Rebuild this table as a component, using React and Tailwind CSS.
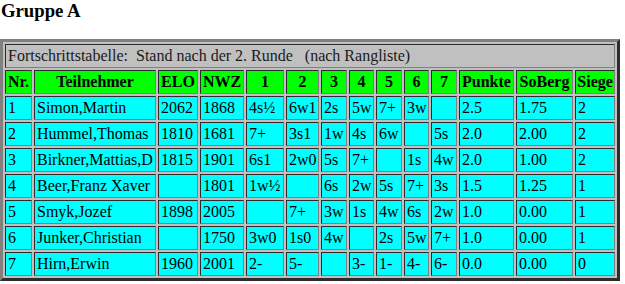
const widths = [
  'w-[27px]', 'w-[122px]', 'w-[40px]', 'w-[44px]', 'w-[38px]', 'w-[33px]', 'w-[26px]',
  'w-[25px]', 'w-[26px]', 'w-[25px]', 'w-[26px]', 'w-[55px]', 'w-[57px]', 'w-[40px]',
];

const head = ['Nr.', 'Teilnehmer', 'ELO', 'NWZ', '1', '2', '3', '4', '5', '6', '7', 'Punkte', 'SoBerg', 'Siege'];

const rows = [
  ['1', 'Simon,Martin', '2062', '1868', '4s½', '6w1', '2s', '5w', '7+', '3w', '', '2.5', '1.75', '2'],
  ['2', 'Hummel,Thomas', '1810', '1681', '7+', '3s1', '1w', '4s', '6w', '', '5s', '2.0', '2.00', '2'],
  ['3', 'Birkner,Mattias,D', '1815', '1901', '6s1', '2w0', '5s', '7+', '', '1s', '4w', '2.0', '1.00', '2'],
  ['4', 'Beer,Franz Xaver', '', '1801', '1w½', '', '6s', '2w', '5s', '7+', '3s', '1.5', '1.25', '1'],
  ['5', 'Smyk,Jozef', '1898', '2005', '', '7+', '3w', '1s', '4w', '6s', '2w', '1.0', '0.00', '1'],
  ['6', 'Junker,Christian', '', '1750', '3w0', '1s0', '4w', '', '2s', '5w', '7+', '1.0', '0.00', '1'],
  ['7', 'Hirn,Erwin', '1960', '2001', '2-', '5-', '', '3-', '1-', '4-', '6-', '0.0', '0.00', '0'],
];

// inset cell border, like an old border="3" table
const cell =
  'h-[24px] p-0 align-middle whitespace-nowrap border border-t-[#2c2c2c] border-l-[#2c2c2c] border-b-[#808080] border-r-[#808080]';

export default function App() {
  return (
    <div className="w-[625px] h-[284px] bg-white text-black font-['Liberation_Serif',serif] text-[16px] leading-[18px] overflow-hidden">
      <div className="h-[39px] pl-[1px]">
        <h3 className="text-[18.72px] leading-[21px] font-bold">Gruppe A</h3>
      </div>

      <table className="table-fixed w-[620px] border-separate border-spacing-[2px] bg-[#c0c0c0] border-[3px] border-t-[#808080] border-l-[#808080] border-b-[#2c2c2c] border-r-[#2c2c2c]">
        <colgroup>
          {widths.map((w, i) => (
            <col key={i} className={w} />
          ))}
        </colgroup>
        <tbody>
          <tr>
            <td colSpan={14} className={`${cell} px-[2px] bg-[#c0c0c0] text-[#1a1a1a] whitespace-pre`}>
              {'Fortschrittstabelle:  Stand nach der 2. Runde   (nach Rangliste)'}
            </td>
          </tr>
          <tr>
            {head.map((h, i) => (
              <th key={i} className={`${cell} px-[1px] bg-[#00ff00] font-bold text-center`}>
                {h}
              </th>
            ))}
          </tr>
          {rows.map((r, ri) => (
            <tr key={ri}>
              {r.map((v, ci) => (
                <td key={ci} className={`${cell} px-[2px] bg-[#00ffff] text-left`}>
                  {v}
                </td>
              ))}
            </tr>
          ))}
        </tbody>
      </table>
    </div>
  );
}
